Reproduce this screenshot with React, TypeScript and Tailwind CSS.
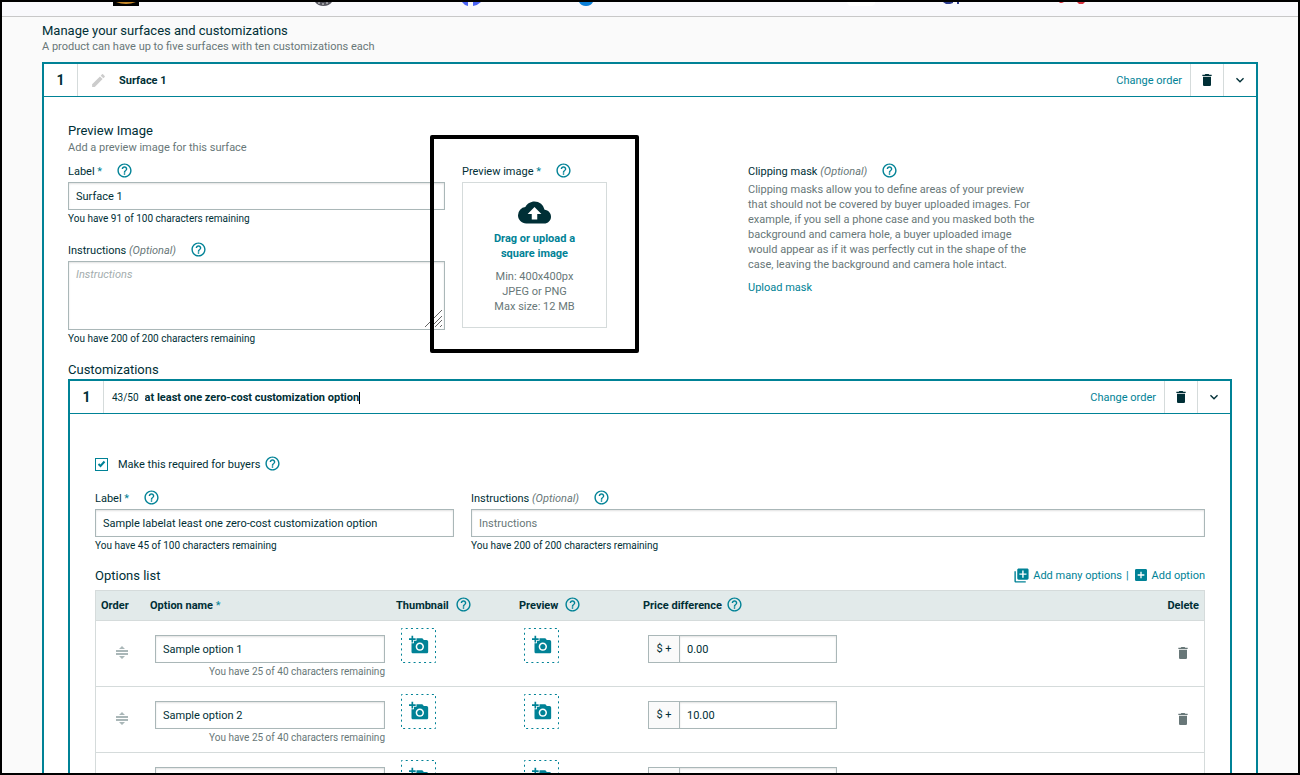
import { useState, type ReactNode } from "react";
import {
  MdAddAPhoto,
  MdAddBox,
  MdCloudUpload,
  MdDelete,
  MdEdit,
  MdExpandMore,
  MdHelpOutline,
  MdLibraryAdd,
} from "react-icons/md";

const options = [
  { id: 1, name: "Sample option 1", price: "0.00" },
  { id: 2, name: "Sample option 2", price: "10.00" },
  { id: 3, name: "", price: "" },
];

const inputClass =
  "block h-7 w-full border border-[#aab7b8] bg-white px-[7px] shadow-[inset_0_1px_2px_rgba(0,0,0,0.12)] outline-none";

function Help({ about }: { about: string }) {
  return (
    <button type="button" aria-label={`Help: ${about}`} className="mb-0.5 text-[#008296]">
      <MdHelpOutline className="size-[17px]" />
    </button>
  );
}

function FieldLabel({
  htmlFor,
  text,
  required,
  optional,
}: {
  htmlFor: string;
  text: string;
  required?: boolean;
  optional?: boolean;
}) {
  return (
    <div className="mb-0.5 flex h-[18px] items-center gap-3.5">
      <label htmlFor={htmlFor} className="pt-0.5">
        {text}
        {required && <span className="text-[#008296]"> *</span>}
        {optional && <em className="text-[#687778]"> (Optional)</em>}
      </label>
      <Help about={text} />
    </div>
  );
}

function Remaining({ left, total }: { left: number; total: number }) {
  return (
    <p className="text-[10px] leading-[18px]">
      You have {left} of {total} characters remaining
    </p>
  );
}

function PanelHeader({ index, children }: { index: number; children: ReactNode }) {
  return (
    <div className="flex h-[33px] items-stretch border-b border-[#008296]">
      <div className="flex w-[34px] items-center justify-center border-r border-[#d5dbdb] text-sm font-bold">
        {index}
      </div>
      <div className="flex flex-1 items-center pt-0.5">{children}</div>
      <button type="button" className="px-2 pt-0.5 text-[#008296]">
        Change order
      </button>
      <button
        type="button"
        aria-label="Delete"
        className="flex w-[33px] items-center justify-center border-l border-[#d5dbdb]"
      >
        <MdDelete className="size-4" />
      </button>
      <button
        type="button"
        aria-label="Collapse"
        className="flex w-[33px] items-center justify-center border-l border-[#d5dbdb]"
      >
        <MdExpandMore className="size-4" />
      </button>
    </div>
  );
}

function PhotoButton({ label }: { label: string }) {
  return (
    <button
      type="button"
      aria-label={label}
      className="relative ml-[5px] flex size-[35px] items-center justify-center pb-0.5 text-[#008296]"
    >
      <svg viewBox="0 0 35 35" className="absolute inset-0 size-[35px]" fill="none">
        <rect
          x="0.5"
          y="0.5"
          width="34"
          height="34"
          stroke="currentColor"
          strokeDasharray="2 3.230"
          strokeDashoffset="1"
        />
      </svg>
      <MdAddAPhoto className="size-5" />
    </button>
  );
}

function DragHandle() {
  return (
    <svg viewBox="0 0 12 13" className="h-[13px] w-3" fill="#aab7b8">
      <path d="M6 0 9 3H3zM0 4h12v2H0zM0 7h12v2H0zM3 10h6l-3 3z" />
    </svg>
  );
}

/* Bottom edge of the bookmark icons that peek in above the page */
function BookmarkStrip() {
  return (
    <div className="h-[15px] shrink-0 border-b border-[#c8c8c8] bg-[#f9f9fc]">
      <svg width="1296" height="5" viewBox="2 2 1296 5">
        <path d="M113 2h26v4h-26z" fill="#000" />
        <path d="M116 2h20q-10 4-20 0z" fill="#c98a2b" />
        <path d="M315 2h17q-3 4-8.500 4T315 2z" fill="#55555f" />
        <path d="M318 3h2M322 4h2M326 3h2" stroke="#ddd" />
        <path d="M462 2h6v4q-4-1-6-4zM473 2h8q-3 3-8 4z" fill="#4a63f5" />
        <path d="M579 2h14q-2 4-7 4t-7-4z" fill="#0a7fd8" />
        <path d="M847 2h28v2q-2 2-4 2h-20q-3 0-4-4z" fill="#fff" />
        <path d="M943 2h10v1l-3 1h-4zM957 2h2v2h-2z" fill="#2b3a8c" />
        <path d="M1059 2h5l-2 1h-2zM1077 2h8l-2 2h-4z" fill="#d9333f" />
      </svg>
    </div>
  );
}

export default function App() {
  const [title, setTitle] = useState("at least one zero-cost customization option");

  return (
    <div className="flex h-screen flex-col overflow-hidden border-2 border-black bg-[#fafafa] font-[Roboto,sans-serif] text-[11px] leading-[14px] text-[#002f36]">
      <BookmarkStrip />

      <main className="min-h-0 flex-1 overflow-hidden px-10 pt-[5px]">
        <h1 className="text-[13px] leading-[18px]">Manage your surfaces and customizations</h1>
        <p className="mb-2 text-[#687778]">
          A product can have up to five surfaces with ten customizations each
        </p>

        <section className="border-2 border-[#008296] bg-white">
          <PanelHeader index={1}>
            <MdEdit className="mb-0.5 ml-3 size-[17px] text-[#ccc]" />
            <span className="ml-3 font-bold">Surface 1</span>
          </PanelHeader>

          <div className="px-6 pt-[25px]">
            <h2 className="text-[13px] leading-[18px]">Preview Image</h2>
            <p className="mb-1.5 leading-4 text-[#687778]">Add a preview image for this surface</p>

            <div className="grid grid-cols-[377fr_269fr_484fr] gap-[17px]">
              <div>
                <FieldLabel htmlFor="surface-label" text="Label" required />
                <input id="surface-label" className={inputClass} defaultValue="Surface 1" />
                <Remaining left={91} total={100} />

                <div className="mt-[13px]">
                  <FieldLabel htmlFor="surface-instructions" text="Instructions" optional />
                  <div className="relative">
                    <textarea
                      id="surface-instructions"
                      placeholder="Instructions"
                      className="block h-[69px] w-full resize-none border border-[#aab7b8] bg-white px-[7px] py-1.5 shadow-[inset_0_1px_2px_rgba(0,0,0,0.12)] outline-none placeholder:text-[#a3adae] placeholder:italic"
                    />
                    <svg
                      viewBox="0 0 18 18"
                      className="absolute right-0.5 bottom-0.5 size-[18px]"
                      stroke="#666"
                      strokeWidth="1"
                    >
                      <path d="M0 17 17 0M6 17 17 6M10 17l7-7M15 17l2-2" />
                    </svg>
                  </div>
                  <Remaining left={200} total={200} />
                </div>
              </div>

              <div className="relative">
                <FieldLabel htmlFor="preview-image" text="Preview image" required />
                <button
                  type="button"
                  id="preview-image"
                  className="flex h-[146px] w-[145px] flex-col items-center border border-[#d5dbdb] px-5 pt-[13px]"
                >
                  <MdCloudUpload className="size-[33px]" />
                  <span className="mt-0.5 leading-[15px] font-bold text-[#008296]">
                    Drag or upload a square image
                  </span>
                  <span className="mt-2 leading-[15px] whitespace-nowrap text-[#687778]">
                    Min: 400x400px
                    <br />
                    JPEG or PNG
                    <br />
                    Max size: 12 MB
                  </span>
                </button>
                {/* Highlight drawn over the upload area */}
                <div className="pointer-events-none absolute -top-[27px] -left-8 h-[218px] w-[209px] rounded-xs border-4 border-black" />
              </div>

              <div>
                <div className="mb-0.5 flex h-[18px] items-center gap-3.5">
                  <h3 className="pt-0.5">
                    Clipping mask <em className="text-[#687778]">(Optional)</em>
                  </h3>
                  <Help about="Clipping mask" />
                </div>
                <p className="max-w-[290px] leading-[15px] text-[#687778]">
                  Clipping masks allow you to define areas of your preview that should not be
                  covered by buyer uploaded images. For example, if you sell a phone case and you
                  masked both the background and camera hole, a buyer uploaded image would appear
                  as if it was perfectly cut in the shape of the case, leaving the background and
                  camera hole intact.
                </p>
                <a href="#upload-mask" className="mt-2 inline-block leading-4 text-[#008296]">
                  Upload mask
                </a>
              </div>
            </div>

            <h2 className="mt-[13px] text-[13px] leading-[18px]">Customizations</h2>
            <section className="border-2 border-[#008296]">
              <PanelHeader index={1}>
                <span className="ml-2 text-[10px]">43/50</span>
                <input
                  aria-label="Customization name"
                  value={title}
                  onChange={(e) => setTitle(e.target.value)}
                  className="field-sizing-content ml-1.5 font-bold caret-transparent outline-none"
                />
                <span className="h-3 w-px bg-black" />
              </PanelHeader>

              <div className="px-[25px] pt-[41px]">
                <div className="flex h-[18px] items-center">
                  <span className="relative size-[13px]">
                    <input
                      id="required"
                      type="checkbox"
                      defaultChecked
                      className="peer block size-[13px] appearance-none border border-[#008296] bg-white"
                    />
                    <svg
                      viewBox="0 0 13 13"
                      className="pointer-events-none absolute inset-0 hidden size-[13px] peer-checked:block"
                      fill="none"
                      stroke="#008296"
                      strokeWidth="2"
                    >
                      <path d="M3.500 6 5.500 8 9.500 3.500" />
                    </svg>
                  </span>
                  <label htmlFor="required" className="mr-1 ml-2.5 pt-0.5">
                    Make this required for buyers
                  </label>
                  <Help about="Required customizations" />
                </div>

                <div className="mt-4 grid grid-cols-[359fr_734fr] gap-[17px]">
                  <div>
                    <FieldLabel htmlFor="custom-label" text="Label" required />
                    <input
                      id="custom-label"
                      className={inputClass}
                      defaultValue="Sample labelat least one zero-cost customization option"
                    />
                    <Remaining left={45} total={100} />
                  </div>
                  <div>
                    <FieldLabel htmlFor="custom-instructions" text="Instructions" optional />
                    <input
                      id="custom-instructions"
                      className={`${inputClass} placeholder:text-[#687778]`}
                      placeholder="Instructions"
                    />
                    <Remaining left={200} total={200} />
                  </div>
                </div>

                <div className="mt-3 mb-[5px] flex h-[18px] items-center text-[#008296]">
                  <h3 className="flex-1 text-[13px] text-[#002f36]">Options list</h3>
                  <button type="button" className="flex items-center gap-[3px]">
                    <MdLibraryAdd className="mb-0.5 size-[17px]" />
                    Add many options
                  </button>
                  <span className="mx-1">|</span>
                  <button type="button" className="flex items-center gap-[3px]">
                    <MdAddBox className="mb-0.5 size-4" />
                    Add option
                  </button>
                </div>

                <table className="w-full table-fixed border-separate border-spacing-0 border border-[#d5dbdb]">
                  <thead>
                    <tr className="h-[30px] bg-[#e2eaea] text-left *:border-b *:border-[#d5dbdb] *:px-[5px]">
                      <th className="w-[49px]">Order</th>
                      <th className="w-[246px]">
                        Option name <span className="font-normal text-[#008296]">*</span>
                      </th>
                      <th className="w-[123px]">
                        <div className="flex h-4 items-center gap-1.5">
                          Thumbnail <Help about="Thumbnail" />
                        </div>
                      </th>
                      <th className="w-[124px]">
                        <div className="flex h-4 items-center gap-1.5">
                          Preview <Help about="Preview" />
                        </div>
                      </th>
                      <th>
                        <div className="flex h-4 items-center gap-1">
                          Price difference <Help about="Price difference" />
                        </div>
                      </th>
                      <th className="w-[60px] text-right">Delete</th>
                    </tr>
                  </thead>
                  <tbody>
                    {options.map((option) => (
                      <tr
                        key={option.id}
                        className="h-[66px] align-top *:border-b *:border-[#d5dbdb] *:px-[5px]"
                      >
                        <td className="pt-[25px]">
                          <button type="button" aria-label="Reorder" className="ml-[15px] block">
                            <DragHandle />
                          </button>
                        </td>
                        <td className="pt-3.5">
                          <div className="ml-[5px] w-[230px] text-right text-[#687778]">
                            <input
                              aria-label="Option name"
                              className={`${inputClass} text-[#002f36]`}
                              defaultValue={option.name}
                            />
                            {option.name && <Remaining left={25} total={40} />}
                          </div>
                        </td>
                        <td className="pt-[7px]">
                          <PhotoButton label="Add thumbnail" />
                        </td>
                        <td className="pt-[7px]">
                          <PhotoButton label="Add preview" />
                        </td>
                        <td className="pt-3.5">
                          <div className="ml-[5px] flex w-[189px]">
                            <span className="flex w-[31px] shrink-0 items-center justify-center border border-r-0 border-[#aab7b8] bg-[#fafafa]">
                              {option.price && "$ +"}
                            </span>
                            <input
                              aria-label="Price difference"
                              className={inputClass}
                              defaultValue={option.price}
                            />
                          </div>
                        </td>
                        <td className="pt-6">
                          <button
                            type="button"
                            aria-label={`Delete option ${option.id}`}
                            className="mr-2 ml-auto block text-[#687778]"
                          >
                            <MdDelete className="size-4" />
                          </button>
                        </td>
                      </tr>
                    ))}
                  </tbody>
                </table>
              </div>
            </section>
          </div>
        </section>
      </main>
    </div>
  );
}
